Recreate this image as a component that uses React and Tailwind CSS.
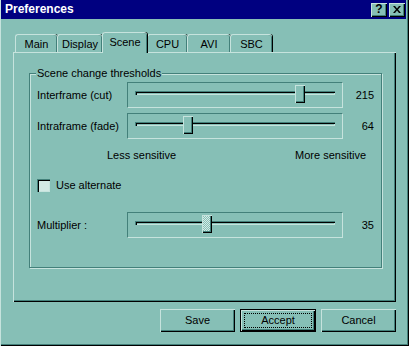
import { useState } from "react";

const tabs = [
  { name: "Main", w: "w-[42px]" },
  { name: "Display", w: "w-[45px]" },
  { name: "Scene", w: "w-[45px]", active: true },
  { name: "CPU", w: "w-[40px]" },
  { name: "AVI", w: "w-[43px]" },
  { name: "SBC", w: "w-[42px]" },
];

function Slider({ value, max, focused }) {
  // track is 200px, thumb travels 190px of it
  const left = 7 + Math.round((value / max) * 190);
  return (
    <div className="relative h-[26px] w-[216px] border border-t-[#43807a] border-l-[#43807a] border-b-[#c6e3dd] border-r-[#c6e3dd]">
      <div className="ml-[7px] mt-[8px] h-[4px] w-[200px] bg-[#86bfb6] shadow-[inset_1px_1px_0_#43807a,inset_2px_2px_0_#000,inset_-1px_-1px_0_#c6e3dd]" />
      <div
        className={
          "absolute top-[2px] h-[18px] w-[10px] shadow-[inset_1px_1px_0_#c6e3dd,inset_-1px_-1px_0_#000,inset_-2px_-2px_0_#43807a] " +
          (focused
            ? "bg-[repeating-conic-gradient(#d6ece7_0_25%,#86bfb6_0_50%)] bg-[length:2px_2px]"
            : "bg-[#86bfb6]")
        }
        style={{ left }}
      />
    </div>
  );
}

function SliderRow({ label, value, max, focused, className }) {
  return (
    <div className={"flex items-center " + (className || "")}>
      <div className="w-[90px]">{label}</div>
      <Slider value={value} max={max} focused={focused} />
      <div className="w-[31px] text-right">{value}</div>
    </div>
  );
}

function Button({ children, isDefault }) {
  if (isDefault) {
    return (
      <button className="relative h-[23px] w-[76px] border border-black bg-[#86bfb6] shadow-[inset_1px_1px_0_#c6e3dd,inset_-1px_-1px_0_#000,inset_-2px_-2px_0_#43807a]">
        <span className="absolute inset-[3px] border border-dotted border-black" />
        {children}
      </button>
    );
  }
  return (
    <button className="h-[23px] w-[75px] bg-[#86bfb6] shadow-[inset_1px_1px_0_#c6e3dd,inset_-1px_-1px_0_#000,inset_-2px_-2px_0_#43807a]">
      {children}
    </button>
  );
}

export default function App() {
  const [alt, setAlt] = useState(false);

  return (
    <div className="h-[346px] w-[409px] overflow-hidden bg-[#86bfb6] font-['Liberation_Sans',Arial,sans-serif] text-[11px] leading-[13px] text-black shadow-[inset_1px_0_0_#c6e3dd,inset_-1px_-1px_0_#000,inset_-2px_-2px_0_#43807a]">
      {/* title bar */}
      <div className="ml-[1px] mr-[3px] flex h-[19px] items-center justify-between bg-[#000080] pl-[4px] pr-[1px]">
        <div className="text-[12px] font-bold text-white">Preferences</div>
        <div className="flex gap-[2px]">
          <div className="flex h-[14px] w-[16px] items-center justify-center bg-[#86bfb6] text-[12px] font-bold shadow-[inset_1px_1px_0_#c6e3dd,inset_-1px_-1px_0_#000,inset_-2px_-2px_0_#43807a]">
            ?
          </div>
          <div className="flex h-[14px] w-[16px] items-center justify-center bg-[#86bfb6] shadow-[inset_1px_1px_0_#c6e3dd,inset_-1px_-1px_0_#000,inset_-2px_-2px_0_#43807a]">
            <svg width="8" height="7" viewBox="0 0 8 7">
              <path d="M0 0h2l2 2.5L6 0h2L5 3.5 8 7H6L4 4.5 2 7H0l3-3.5z" fill="#000" />
            </svg>
          </div>
        </div>
      </div>

      {/* tabs */}
      <div className="ml-[15px] mt-[13px] flex h-[20px] items-end">
        {tabs.map((t) =>
          t.active ? (
            <div
              key={t.name}
              className={
                "relative z-10 -mb-[1px] flex h-[21px] items-start justify-center rounded-t-[3px] border-l border-t border-[#c6e3dd] bg-[#86bfb6] pt-[3px] shadow-[inset_-1px_0_0_#43807a,1px_0_0_#000] " +
                t.w
              }
            >
              {t.name}
            </div>
          ) : (
            <div
              key={t.name}
              className={
                "flex h-[18px] items-start justify-center rounded-t-[3px] border-l border-t border-[#c6e3dd] pt-[3px] shadow-[inset_-1px_0_0_#43807a,1px_0_0_#000] " +
                t.w
              }
            >
              {t.name}
            </div>
          )
        )}
      </div>

      {/* tab panel */}
      <div className="ml-[13px] h-[250px] w-[383px] pt-[21px] shadow-[inset_1px_1px_0_#c6e3dd,inset_-1px_-1px_0_#000,inset_-2px_-2px_0_#43807a]">
        <div className="relative ml-[16px] w-[353px] border border-[#43807a] pb-[29px] pl-[7px] pt-[8px] shadow-[1px_1px_0_#c6e3dd,inset_1px_1px_0_#c6e3dd]">
          <div className="absolute -top-[7px] left-[6px] bg-[#86bfb6] px-[1px]">
            Scene change thresholds
          </div>

          <SliderRow label="Interframe (cut)" value={215} max={255} />
          <SliderRow label="Intraframe (fade)" value={64} max={255} className="mt-[5px]" />

          <div className="ml-[70px] mt-[10px] flex w-[259px] justify-between">
            <span>Less sensitive</span>
            <span>More sensitive</span>
          </div>

          <label className="mt-[17px] flex h-[13px] items-center">
            <span
              onClick={() => setAlt(!alt)}
              className="flex h-[13px] w-[13px] items-center justify-center bg-[#d2e9e4] shadow-[inset_1px_1px_0_#43807a,inset_2px_2px_0_#000,inset_-1px_-1px_0_#c6e3dd]"
            >
              {alt && (
                <svg width="7" height="7" viewBox="0 0 7 7">
                  <path d="M0 3l2 2 5-5v2L2 7 0 5z" fill="#000" />
                </svg>
              )}
            </span>
            <span className="ml-[6px]">Use alternate</span>
          </label>

          <SliderRow label="Multiplier :" value={35} max={100} focused className="mt-[20px]" />
        </div>
      </div>

      {/* buttons */}
      <div className="mt-[7px] flex justify-end gap-[5px] pr-[13px]">
        <Button>Save</Button>
        <Button isDefault>Accept</Button>
        <Button>Cancel</Button>
      </div>
    </div>
  );
}
